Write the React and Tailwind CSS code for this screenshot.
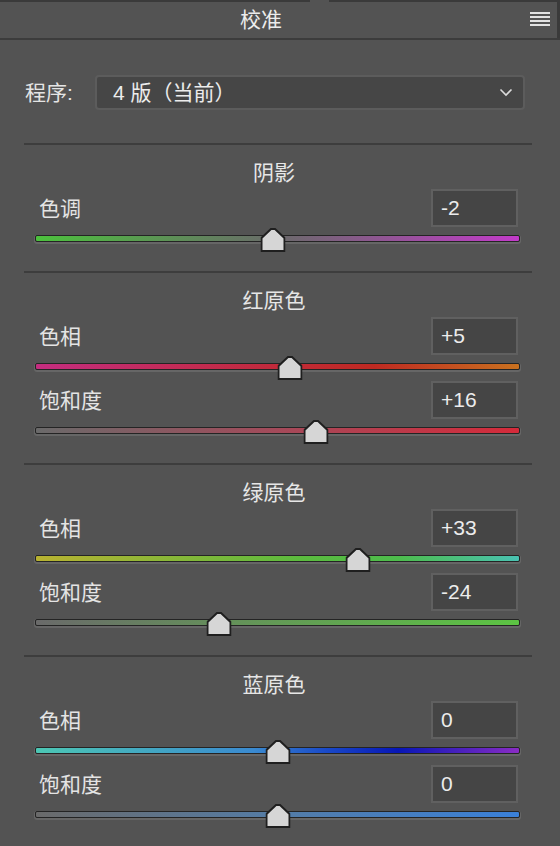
const FONT = "font-['Liberation_Sans','Noto_Sans_CJK_SC',sans-serif]"

const SECTIONS = [
  {
    title: '阴影',
    rows: [
      { label: '色调', value: -2, track: 'bg-[linear-gradient(to_right,#4cc13d,#6a6a6a_50%,#c23bc9)]' },
    ],
  },
  {
    title: '红原色',
    rows: [
      { label: '色相', value: 5, track: 'bg-[linear-gradient(to_right,#c42d80,#c22a3a_50%,#bf2a22_70%,#c9711f)]' },
      { label: '饱和度', value: 16, track: 'bg-[linear-gradient(to_right,#6a6a6a,#a44a5a_50%,#d52a3a)]' },
    ],
  },
  {
    title: '绿原色',
    rows: [
      { label: '色相', value: 33, track: 'bg-[linear-gradient(to_right,#b8b231,#5bbb3e_55%,#4dbc4c_75%,#49c2b2)]' },
      { label: '饱和度', value: -24, track: 'bg-[linear-gradient(to_right,#6a6a6a,#639a56_50%,#5cc443)]' },
    ],
  },
  {
    title: '蓝原色',
    rows: [
      { label: '色相', value: 0, track: 'bg-[linear-gradient(to_right,#4cc7b4,#3a8ad0_45%,#1a4ac8_60%,#0716b6_75%,#8a2cc4)]' },
      { label: '饱和度', value: 0, track: 'bg-[linear-gradient(to_right,#6a6a6a,#547ca6_50%,#3a80d8)]' },
    ],
  },
]

function fmt(v) {
  return v > 0 ? `+${v}` : `${v}`
}

function Thumb() {
  return (
    <svg width="25" height="24" viewBox="0 0 25 24">
      <polygon points="10.5,1 14.5,1 24,10 24,23 1,23 1,10" fill="#d6d6d6" stroke="#1f1f1f" strokeWidth="2" strokeLinejoin="miter" />
    </svg>
  )
}

function SliderRow({ row }) {
  return (
    <div>
      <div className="flex items-center justify-between h-[38px] pl-[15px] pr-[14px]">
        <span className="text-[21px] text-[#e4e4e4] leading-none">{row.label}</span>
        <div className="w-[87px] h-[38px] bg-[#454545] border-2 border-[#606060] flex items-center pl-[8px] text-[21px] text-[#ececec]">
          {fmt(row.value)}
        </div>
      </div>
      <div className="relative h-[26px] pt-[8px] ml-[11px] mr-[12px]">
        <div className={`h-[7px] rounded-[2px] border border-[#242424] shadow-[0_1px_0_1px_#666666] ${row.track}`} />
        <div
          className="absolute top-[1px] -translate-x-1/2"
          style={{ left: `${(row.value + 100) / 2}%` }}
        >
          <Thumb />
        </div>
      </div>
    </div>
  )
}

function Section({ section }) {
  return (
    <div className="border-t-2 border-[#3d3d3d] pt-[14px] pb-[18px]">
      <div className="h-[28px] leading-[28px] text-center text-[21px] text-[#e6e6e6] pr-[8px]">{section.title}</div>
      <div className="mt-[2px]">
        {section.rows.map((r, i) => (
          <SliderRow key={i} row={r} />
        ))}
      </div>
    </div>
  )
}

export default function App() {
  return (
    <div className={`w-[560px] h-[846px] bg-[#535353] overflow-hidden ${FONT}`}>
      {/* tab strip */}
      <div className="flex h-[2px]">
        <div className="w-[310px] bg-[#3a3a3a]" />
        <div className="w-[19px]" />
        <div className="flex-1 bg-[#3a3a3a]" />
      </div>

      {/* header */}
      <div className="relative h-[38px] border-b-2 border-[#3c3c3c] flex items-center justify-center pr-[38px]">
        <span className="text-[21px] text-[#ececec]">校准</span>
        <div className="absolute right-[10px] top-[10px] w-[20px] flex flex-col gap-[2px]">
          <div className="h-[2px] bg-[#e2e2e2]" />
          <div className="h-[2px] bg-[#e2e2e2]" />
          <div className="h-[2px] bg-[#e2e2e2]" />
          <div className="h-[2px] bg-[#e2e2e2]" />
        </div>
        <div className="absolute right-0 top-0 bottom-0 w-[3px] bg-[#3a3a3a]" />
      </div>

      {/* process version */}
      <div className="flex items-center pt-[35px] pl-[25px]">
        <span className="w-[70px] text-[21px] text-[#e4e4e4]">程序:</span>
        <div className="w-[430px] h-[35px] rounded-[4px] border-2 border-[#5c5c5c] bg-[#464646] flex items-center justify-between pl-[16px] pr-[10px]">
          <span className="text-[21px] text-[#ececec]">4 版（当前）</span>
          <svg width="14" height="9" viewBox="0 0 14 9">
            <path d="M1.5 1.5 L7 7 L12.5 1.5" fill="none" stroke="#dcdcdc" strokeWidth="1.6" />
          </svg>
        </div>
      </div>

      <div className="w-[508px] ml-[24px] mt-[33px]">
        {SECTIONS.map((s, i) => (
          <Section key={i} section={s} />
        ))}
      </div>
    </div>
  )
}
